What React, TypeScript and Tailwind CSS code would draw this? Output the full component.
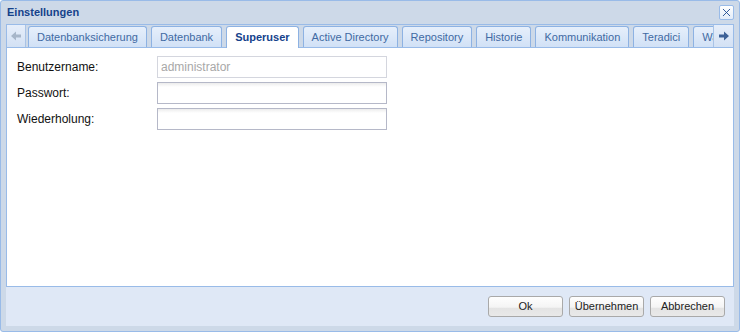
import { X } from 'lucide-react';

const tabs = [
    { label: 'Datenbanksicherung' },
    { label: 'Datenbank' },
    { label: 'Superuser', active: true },
    { label: 'Active Directory' },
    { label: 'Repository' },
    { label: 'Historie' },
    { label: 'Kommunikation' },
    { label: 'Teradici' },
    { label: 'Wartung' },
];

const fields = [
    { label: 'Benutzername:', value: 'administrator', disabled: true },
    { label: 'Passwort:', value: '' },
    { label: 'Wiederholung:', value: '' },
];

const Arrow = ({ dir, color }: { dir: 'left' | 'right'; color: string }) => (
    <svg width="12" height="10" viewBox="0 0 12 10" className={dir === 'left' ? 'rotate-180' : ''}>
        <path d="M1 3.5h5V0.5L11 5l-5 4.5v-3H1z" fill={color} />
    </svg>
);

const Settings = () => {
    return (
        <div className="w-[740px] h-[332px] flex flex-col border border-[#99bbe8] bg-[#cdd9e8] rounded-[3px] font-['Liberation_Sans',Arial,sans-serif] overflow-hidden">
            <div className="h-[23px] flex items-center justify-between pl-[6px] pr-[5px]">
                <span className="text-[11px] font-bold text-[#15428b] -mt-px">Einstellungen</span>
                <button className="w-[15px] h-[15px] flex items-center justify-center rounded-[2px] border border-[#99bbe8] bg-gradient-to-b from-white to-[#e3ecf8]">
                    <X className="w-[13px] h-[13px] text-[#15428b]" strokeWidth={1.6} />
                </button>
            </div>

            <div className="mx-[5px] flex-1 flex flex-col">
                {/* tab strip */}
                <div className="h-[24px] flex border border-[#99bbe8] bg-[#cdd9e8]">
                    <div className="w-[19px] h-[22px] flex items-center justify-center bg-gradient-to-b from-[#e6eefa] to-[#d3e1f4] border-r border-[#a9c3e6]">
                        <Arrow dir="left" color="#a7b6c9" />
                    </div>
                    <div className="flex-1 flex items-end gap-[4px] pl-[2px] overflow-hidden -mb-px">
                        {tabs.map((tab, i) => (
                            <div
                                key={i}
                                className={`shrink-0 px-[8px] flex items-center rounded-t-[3px] border border-b-0 border-[#8db2e3] text-[11px] ${
                                    tab.active
                                        ? 'h-[22px] bg-white font-bold text-[#15428b]'
                                        : 'h-[21px] mb-px bg-gradient-to-b from-[#e6effb] to-[#d1e1f6] text-[#416aa3]'
                                }`}
                            >
                                {tab.label}
                            </div>
                        ))}
                    </div>
                    <div className="w-[20px] h-[22px] flex items-center justify-center bg-gradient-to-b from-[#e6eefa] to-[#d3e1f4] border-l border-[#a9c3e6]">
                        <Arrow dir="right" color="#3d6197" />
                    </div>
                </div>

                {/* body */}
                <div className="flex-1 bg-white border-x border-b border-[#99bbe8] pt-[8px] pl-[10px] flex flex-col gap-[4px]">
                    {fields.map((f, i) => (
                        <div key={i} className="flex items-center">
                            <label className="w-[140px] text-[12px] text-[#111]">{f.label}</label>
                            <input
                                readOnly
                                value={f.value}
                                className={`w-[230px] h-[22px] px-[3px] text-[12px] outline-none border ${
                                    f.disabled
                                        ? 'border-[#d4d6de] bg-white text-[#a8a8a8]'
                                        : 'border-[#b5b8c8] bg-[linear-gradient(to_bottom,#ececec_0px,#ffffff_4px)] text-[#111]'
                                }`}
                            />
                        </div>
                    ))}
                </div>

                {/* footer */}
                <div className="h-[39px] bg-[#dfe8f6] flex items-center justify-end gap-[6px] pr-[9px]">
                    {['Ok', 'Übernehmen', 'Abbrechen'].map((b) => (
                        <button
                            key={b}
                            className="w-[75px] h-[21px] rounded-[3px] border border-[#a9a9a9] text-[11px] text-[#222] bg-[linear-gradient(to_bottom,#fefefe_0%,#f4f4f4_55%,#e3e3e3_56%,#e9e9e9_100%)]"
                        >
                            {b}
                        </button>
                    ))}
                </div>
            </div>
            <div className="h-[5px]" />
        </div>
    );
};

export default Settings;
